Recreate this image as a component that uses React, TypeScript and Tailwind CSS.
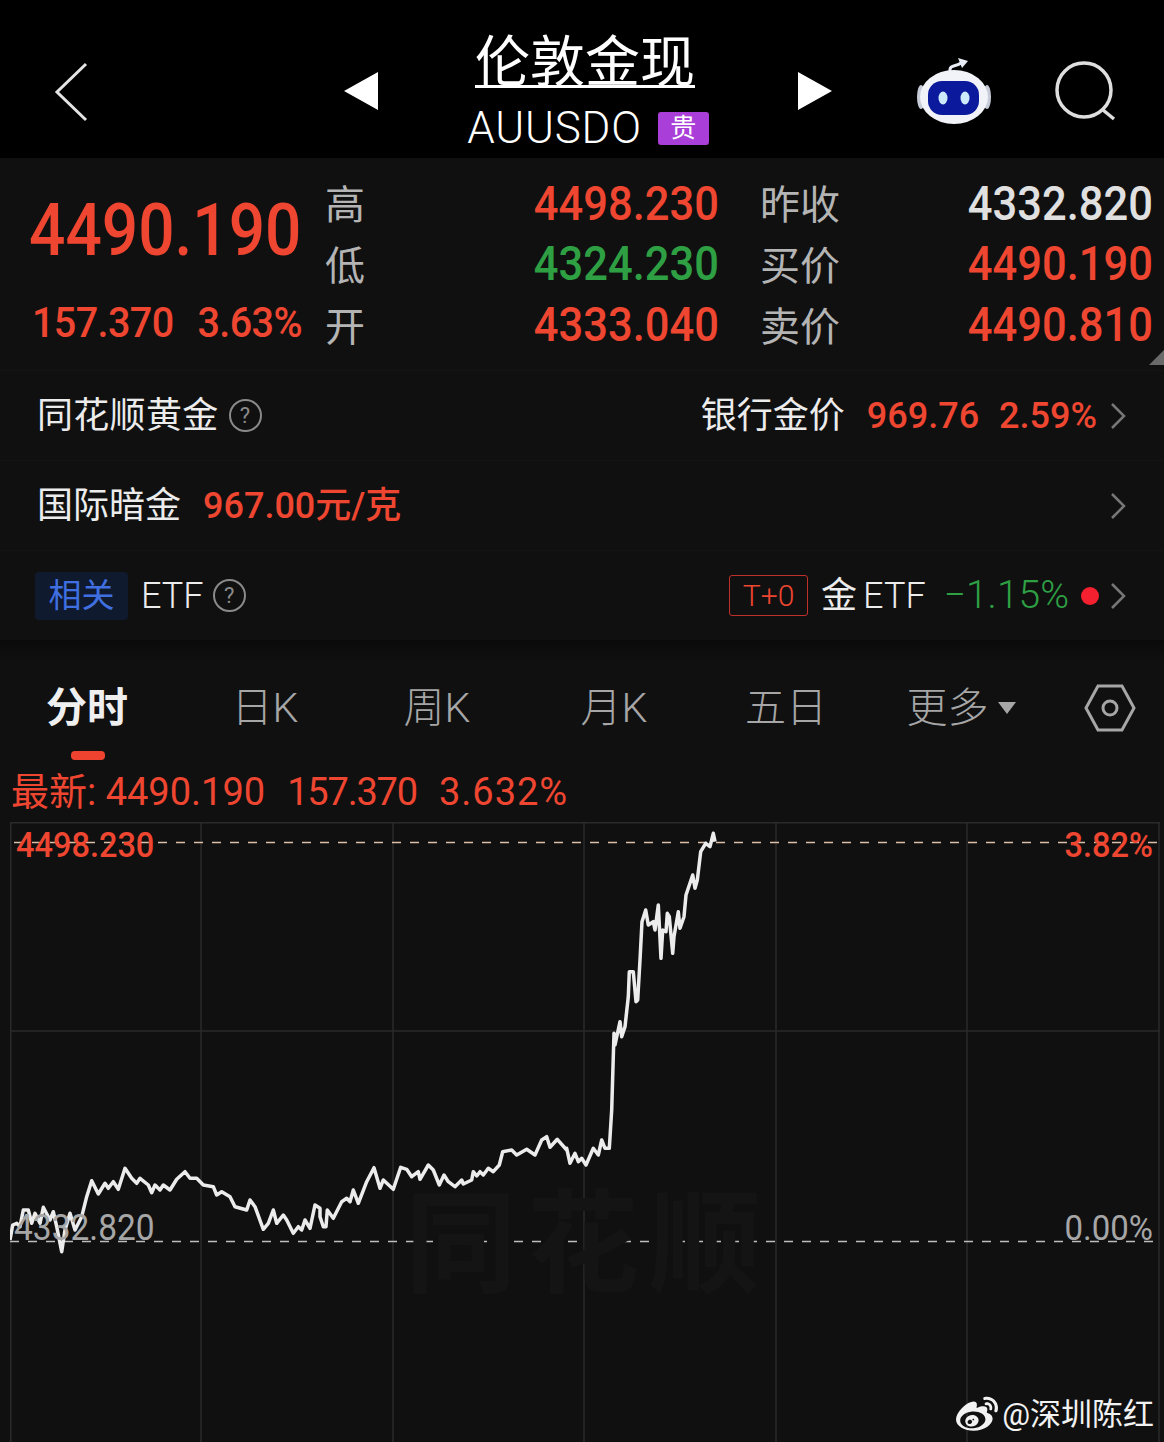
import { FaWeibo } from "react-icons/fa";

const RED = "text-[#ee4630]";

const seg1 = [[30,360],[38,315],[50,310],[60,320],[70,270],[85,270],[95,310],[105,280],[120,310],[130,262],[150,300],[160,275],[170,320],[185,395],[195,330],[210,280],[225,330],[245,290],[260,230],[275,182],[295,222],[315,190],[325,205],[340,185],[355,208],[375,145],[395,175],[410,190],[420,175],[445,195],[455,218],[465,195],[480,210],[490,195],[510,210],[530,178],[555,155],[570,175],[590,175],[610,195],[640,200],[650,225],[665,215],[690,230],[705,260],[740,270],[750,240],[765,260],[790,328],[805,310],[820,270],[830,310],[850,285],[860,300],[880,340],[895,320],[905,330],[915,300],[930,325],[945,255],[960,265]];
const seg2 = [[60,290],[70,320],[78,320],[82,270],[100,295],[125,245],[140,235],[150,245],[160,210],[175,250],[200,185],[222,143],[240,205],[250,180],[280,208],[302,142],[320,148],[335,170],[355,155],[360,178],[385,135],[400,150],[418,195],[432,165],[445,185],[465,200],[485,180],[490,192],[515,180],[520,155],[530,168],[540,155],[550,165],[565,145],[580,155],[598,135],[608,95],[635,90],[650,105],[680,88],[705,105],[725,60],[740,50],[750,82],[772,58],[800,90]];
const seg3 = [[20,985],[30,1030],[45,1000],[55,1025],[65,1015],[78,1035],[100,985],[115,1005],[125,960],[135,985],[148,985],[155,870],[162,640],[165,675],[180,605],[185,650],[195,620],[205,530],[208,455],[220,455],[228,545],[233,540],[240,420],[246,305],[257,270],[265,315],[280,305],[285,330],[295,255],[303,415],[308,330],[318,335],[322,280],[328,290],[338,400],[342,350],[355,275],[360,325],[372,290],[378,225],[398,165],[405,205],[412,180],[422,95],[437,70],[450,80],[460,40],[465,65]];

// chart origin on page: x=10, y=822
const pts = [
  ...seg1.map(([x, y]) => [x / 3 - 10, 1120 + y / 3 - 822]),
  ...seg2.map(([x, y]) => [300 + x / 3 - 10, 1120 + y / 3 - 822]),
  ...seg3.map(([x, y]) => [560 + x / 3 - 10, 820 + y / 3 - 822]),
];
const linePoints = pts.map(([x, y]) => `${x.toFixed(1)},${y.toFixed(1)}`).join(" ");

function Num({ children, className = "" }: { children: React.ReactNode; className?: string }) {
  return <span className={`inline-block scale-y-[1.12] text-[43.5px] leading-none font-medium ${className}`}>{children}</span>;
}

function Label({ children }: { children: React.ReactNode }) {
  return <span className="relative top-[3px] text-[40px] leading-none text-[#b4b4b4]">{children}</span>;
}

function Help() {
  return (
    <span className="flex h-[33px] w-[33px] items-center justify-center rounded-full border-2 border-[#8a8a8a] text-[22px] leading-none text-[#8a8a8a]">?</span>
  );
}

function Chevron() {
  return (
    <svg width="16" height="28" viewBox="0 0 16 28" fill="none" stroke="#777" strokeWidth="2.5">
      <path d="M2 2 L14 14 L2 26" />
    </svg>
  );
}

function Robot() {
  return (
    <svg width="76" height="70" viewBox="0 0 76 70">
      <path d="M34 15 C33 7 40 10 45 6" fill="none" stroke="#e8ecf5" strokeWidth="3" />
      <path d="M42 1 L52 4 L46 11 Z" fill="#e8ecf5" />
      <ellipse cx="5" cy="40" rx="4" ry="12" fill="#c6cbd8" />
      <ellipse cx="71" cy="40" rx="4" ry="12" fill="#c6cbd8" />
      <ellipse cx="38" cy="40" rx="34" ry="27" fill="#f1f3f9" />
      <rect x="12" y="24" width="51" height="34" rx="14" fill="#0b1a9c" />
      <ellipse cx="27" cy="41" rx="4.5" ry="6.5" fill="#cdeafc" />
      <ellipse cx="49" cy="41" rx="4.5" ry="6.5" fill="#cdeafc" />
    </svg>
  );
}

function Header() {
  return (
    <header className="flex h-[158px] items-center bg-black pt-[28px] pl-[54px] text-white">
      <svg width="34" height="60" viewBox="0 0 34 60" fill="none" stroke="#e4e4e4" strokeWidth="3" className="mt-[-2px]">
        <path d="M32 2 L3 30 L32 58" />
      </svg>
      <svg width="34" height="38" viewBox="0 0 34 38" className="ml-[256px] mt-[-4px]">
        <path d="M34 0 V38 L0 19 Z" fill="#fff" />
      </svg>
      <div className="mb-[4px] flex w-[420px] flex-col items-center">
        <div className="mr-[6px] h-[56px] w-[220px] border-b-[3px] border-white text-center text-[55px] leading-[60px] font-normal whitespace-nowrap">伦敦金现</div>
        <div className="mt-[18px] flex items-center gap-[16px]">
          <span className="text-[44px] leading-[44px] font-light tracking-[0.8px]">AUUSDO</span>
          <span className="flex h-[33px] w-[51px] items-center justify-center rounded-[3px] bg-[#a93fd8] text-[26px] leading-none text-white">贵</span>
        </div>
      </div>
      <svg width="34" height="38" viewBox="0 0 34 38" className="mt-[-4px]">
        <path d="M0 0 V38 L34 19 Z" fill="#fff" />
      </svg>
      <div className="ml-[84px] mt-[-2px]">
        <Robot />
      </div>
      <svg width="64" height="64" viewBox="0 0 64 64" fill="none" stroke="#dedede" strokeWidth="3.5" className="ml-[62px]">
        <circle cx="30" cy="29" r="27" />
        <path d="M49 49 L60 58" />
      </svg>
    </header>
  );
}

function Stats() {
  const rows: [string, string, string, string, string, string][] = [
    ["高", "4498.230", RED, "昨收", "4332.820", "text-[#e0e0e0]"],
    ["低", "4324.230", "text-[#2ea043]", "买价", "4490.190", RED],
    ["开", "4333.040", RED, "卖价", "4490.810", RED],
  ];
  return (
    <section className="relative flex h-[212px] bg-[#101011] pt-[15px]">
      <div className="flex w-[325px] flex-col pl-[29px]">
        <span className={`mt-[26px] inline-block scale-y-[1.14] text-[64px] leading-none font-medium ${RED}`}>4490.190</span>
        <div className={`mt-[40px] flex gap-[24px] pl-[3px] text-[39.5px] leading-none font-medium scale-y-[1.08] tracking-[-0.6px] whitespace-nowrap ${RED}`}>
          <span>157.370</span>
          <span>3.63%</span>
        </div>
      </div>
      <div className="grid h-[182px] w-[828px] grid-cols-[40px_354px_41px_80px_313px] grid-rows-3 items-center">
        {rows.map(([a, b, c, d, e, f]) => (
          <div key={a} className="contents">
            <Label>{a}</Label>
            <div className="text-right"><Num className={c}>{b}</Num></div>
            <div className="col-start-4"><Label>{d}</Label></div>
            <div className="text-right"><Num className={f}>{e}</Num></div>
          </div>
        ))}
      </div>
      <div className="absolute right-0 bottom-[5px] h-0 w-0 border-b-[15px] border-l-[15px] border-b-[#6a6a6a] border-l-transparent" />
    </section>
  );
}

function Rows() {
  return (
    <section className="bg-[#101011] text-[36px] leading-none text-[#ececec]">
      <div className="flex h-[90px] items-center border-t border-[#141415] pl-[37px] pr-[38px]">
        <span className="tracking-[0.3px]">同花顺黄金</span>
        <span className="ml-[10px]"><Help /></span>
        <span className="ml-auto">银行金价</span>
        <span className={`ml-[22px] font-medium ${RED}`}>969.76</span>
        <span className={`ml-[20px] font-medium ${RED}`}>2.59%</span>
        <span className="ml-[13px]"><Chevron /></span>
      </div>
      <div className="flex h-[90px] items-center border-t border-[#141415] pl-[37px] pr-[38px]">
        <span>国际暗金</span>
        <span className={`ml-[22px] font-medium ${RED}`}>967.00元/克</span>
        <span className="ml-auto"><Chevron /></span>
      </div>
      <div className="flex h-[90px] items-center border-t border-[#141415] pl-[35px] pr-[38px]">
        <span className="flex h-[48px] w-[93px] items-center justify-center rounded-[4px] bg-[#0f1a2e] text-[33px] text-[#3f6fe0]">相关</span>
        <span className="ml-[13px] font-light">ETF</span>
        <span className="ml-[9px]"><Help /></span>
        <span className="ml-auto flex h-[41px] w-[79px] items-center justify-center rounded-[3px] border border-[#c0302a] text-[30px] font-light text-[#ee4630]">T+0</span>
        <span className="ml-[13px]">金</span>
        <span className="ml-[6px] font-light">ETF</span>
        <span className="ml-[18px] text-[39px] font-light text-[#2ea043]">−1.15%</span>
        <span className="ml-[12px] h-[18px] w-[18px] rounded-full bg-[#f5202f]" />
        <span className="ml-[11px]"><Chevron /></span>
      </div>
      <div className="h-[20px] bg-gradient-to-b from-[#0a0a0a] to-[#101011]" />
    </section>
  );
}

function Tabs() {
  const tabs: [string, string][] = [
    ["日K", "w-[182px]"],
    ["周K", "w-[162px]"],
    ["月K", "w-[192px]"],
    ["五日", "w-[152px]"],
  ];
  return (
    <section className="relative flex h-[100px] items-center bg-[#101011] pb-[4px] text-[41px] leading-none font-light text-[#a6a6a6]">
      <span className="w-[174px] text-center font-bold text-[#efefef]">分时</span>
      {tabs.map(([t, w]) => (
        <span key={t} className={`${w} text-center`}>{t}</span>
      ))}
      <span className="flex w-[198px] items-center justify-center gap-[9px]">
        更多
        <svg width="18" height="12" viewBox="0 0 18 12"><path d="M0 0 H18 L9 12 Z" fill="#a6a6a6" /></svg>
      </span>
      <svg width="52" height="48" viewBox="0 0 52 48" fill="none" stroke="#a6a6a6" strokeWidth="3" className="ml-[24px]">
        <path d="M14 2 H38 L50 24 L38 46 H14 L2 24 Z" />
        <circle cx="26" cy="24" r="7" />
      </svg>
      <span className="absolute bottom-0 left-[71px] h-[9px] w-[34px] rounded-[4px] bg-[#f0432f]" />
    </section>
  );
}

function Chart() {
  const H = 620;
  return (
    <div className="relative ml-[10px] h-[620px] w-[1150px]">
      <svg width="1150" height={H} viewBox={`0 0 1150 ${H}`} className="absolute inset-0">
        <g stroke="#2a2a2b" strokeWidth="1.5">
          <line x1="0.75" y1="0" x2="0.75" y2={H} />
          <line x1="191" y1="0" x2="191" y2={H} />
          <line x1="383" y1="0" x2="383" y2={H} />
          <line x1="574" y1="0" x2="574" y2={H} />
          <line x1="766" y1="0" x2="766" y2={H} />
          <line x1="957" y1="0" x2="957" y2={H} />
          <line x1="1149" y1="0" x2="1149" y2={H} />
          <line x1="0" y1="0.75" x2="1150" y2="0.75" />
          <line x1="0" y1="209" x2="1150" y2="209" />
        </g>
        <line x1="4" y1="20.5" x2="1150" y2="20.5" stroke="#dcbfa8" strokeWidth="1.5" strokeDasharray="9 9" />
        <line x1="0" y1="419.5" x2="1150" y2="419.5" stroke="#bdbdbd" strokeWidth="1.5" strokeDasharray="9 9" />
        <polyline points={linePoints} fill="none" stroke="#ececec" strokeWidth="3.5" strokeLinejoin="round" />
      </svg>
      <div className="absolute top-[368px] left-[395px] text-[112px] leading-none font-bold tracking-[10px] text-[#141415] whitespace-nowrap">同花顺</div>
      <span className={`absolute top-[7px] left-[6px] text-[32.5px] leading-[32px] font-medium scale-y-[1.1] ${RED}`}>4498.230</span>
      <span className={`absolute top-[7px] right-[7px] text-[32.5px] leading-[32px] font-medium scale-y-[1.1] ${RED}`}>3.82%</span>
      <span className="absolute top-[390px] left-[4px] text-[33.5px] leading-[32px] text-[#a6a6a6] scale-y-[1.08]">4332.820</span>
      <span className="absolute top-[390px] right-[7px] text-[33px] leading-[32px] text-[#a6a6a6] scale-y-[1.08]">0.00%</span>
      <div className="absolute top-[572px] right-[6px] flex items-center gap-[4px] text-[31px] leading-[32px] text-[#f2f2f2]">
        <FaWeibo size={42} color="#f2f2f2" />
        <span>@深圳陈红</span>
      </div>
    </div>
  );
}

export default function App() {
  return (
    <div className="h-[1442px] w-[1164px] overflow-hidden bg-[#101011] font-['Roboto','Noto_Sans_CJK_SC',sans-serif]">
      <Header />
      <Stats />
      <Rows />
      <Tabs />
      <div className={`flex h-[62px] items-center pl-[11px] pt-[2px] text-[38px] leading-none ${RED} whitespace-nowrap`}>
        <span>最新: 4490.190</span>
        <span className="ml-[22px] tracking-[-1.2px]">157.370</span>
        <span className="ml-[22px] tracking-[1px]">3.632%</span>
      </div>
      <Chart />
    </div>
  );
}
